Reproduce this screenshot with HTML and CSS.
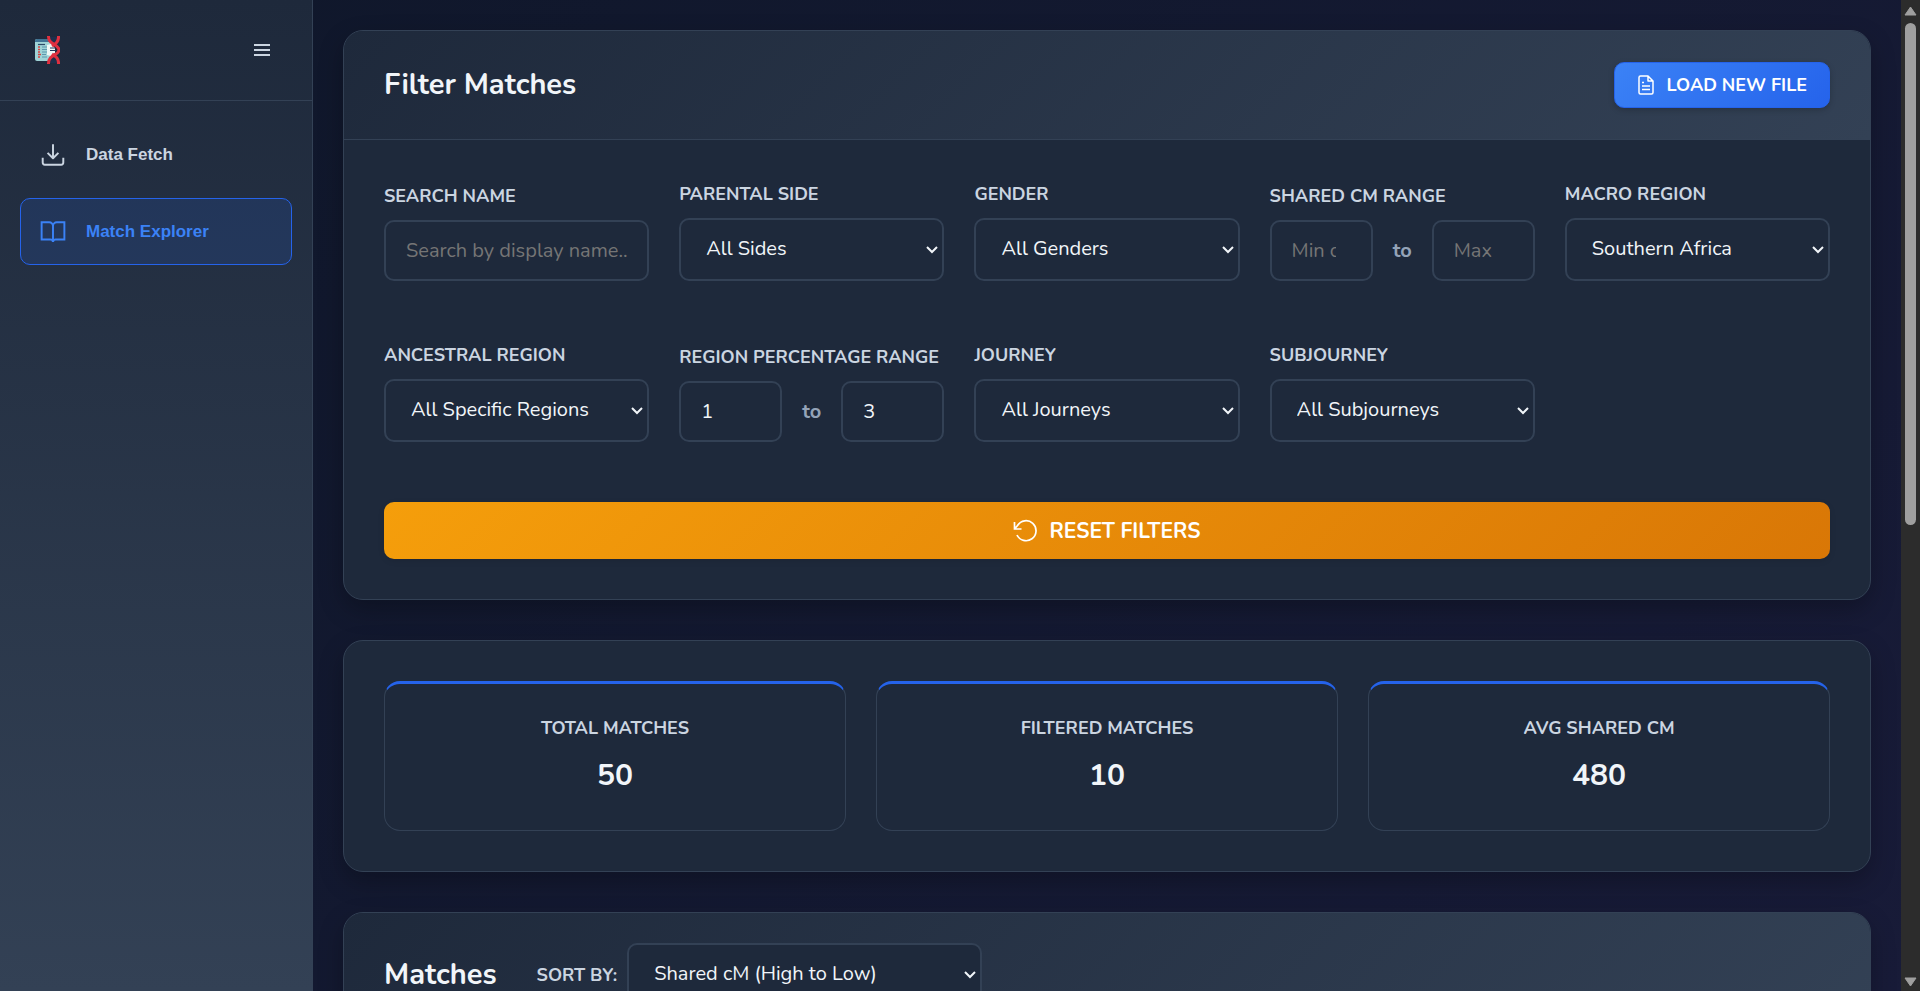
FILE: index.html
```html
<!DOCTYPE html>
<html lang="en">
<head>
    <meta charset="UTF-8">
    <meta name="viewport" content="width=device-width, initial-scale=1.0">
    <title>Match Explorer</title>
    <link rel="stylesheet" href="styles.css">
</head>
<body>
    <aside class="sidebar">
        <div class="sidebar-header">
            <svg class="logo" viewBox="0 0 26 28" width="26" height="28" aria-hidden="true">
                <rect x="1" y="3" width="17" height="22" rx="2" fill="#9fd3d6"/>
                <path d="M1 6V5a2 2 0 0 1 2-2h12v3z" fill="#3f7394"/>
                <path d="M4 8.500h7" stroke="#2c4a66" stroke-width="1.200"/>
                <path d="M8 11h5M8 13.500h5M8 16h5M8 18.500h4M8 21h5" stroke="#5b97ad" stroke-width="1.200"/>
                <path d="M4 11h2M4 13.500h2M4 16h2M4 18.500h3M4 21h2" stroke="#d8433f" stroke-width="1.300"/>
                <path d="M13 9l4-1 4 4v5l-4 3-4-1z" fill="#eef8f6"/>
                <path d="M15 1h9v4l-4 4-5-4zM15 27h9v-4l-4-4-5 4z" fill="#1d2f4c"/>
                <path d="M16 12h5M16 14.500h6" stroke="#24385a" stroke-width="1"/>
                <path d="M14.500 0C14 9 25 8 25 14C25 20 14 18 14.500 28" fill="none" stroke="#e0303f" stroke-width="3"/>
                <path d="M24.500 0C25 6 21 8 18 10M18 18C21 20 25 22 24.500 28" fill="none" stroke="#e0303f" stroke-width="3"/>
            </svg>
            <button class="menu-toggle" aria-label="Toggle menu">
                <svg viewBox="0 0 20 20" width="20" height="20" fill="none" stroke="currentColor" stroke-width="2"><path d="M2 5h16M2 10h16M2 15h16"/></svg>
            </button>
        </div>
        <nav class="sidebar-nav">
            <a class="nav-item" href="#fetch">
                <svg viewBox="0 0 24 24" width="26" height="26" fill="none" stroke="currentColor" stroke-width="1.800" stroke-linejoin="round"><path d="M12 2v13M7 10l5 5 5-5M2.500 14.500V19a2 2 0 0 0 2 2h15a2 2 0 0 0 2-2v-4.500"/></svg>
                <span>Data Fetch</span>
            </a>
            <a class="nav-item active" href="#explorer">
                <svg viewBox="0 0 24 24" width="26" height="26" fill="none" stroke="currentColor" stroke-width="1.800"><path d="M1.500 3h7a3.500 3.500 0 0 1 3.500 3.500V21a2.500 2.500 0 0 0-2.500-2h-8zM22.500 3h-7A3.500 3.500 0 0 0 12 6.500V21a2.500 2.500 0 0 1 2.500-2h8z"/></svg>
                <span>Match Explorer</span>
            </a>
        </nav>
    </aside>

    <main class="content">
        <section class="panel">
            <div class="panel-header">
                <h2>Filter Matches</h2>
                <button class="load-button">
                    <svg viewBox="0 0 18 20" width="18" height="20" fill="none" stroke="currentColor" stroke-width="1.500" stroke-linejoin="round"><path d="M11 1H3.500A1.500 1.500 0 0 0 2 2.500v15A1.500 1.500 0 0 0 3.500 19h11a1.500 1.500 0 0 0 1.500-1.500V6zM11 1v5h5M5 7.500h2M5 11h8M5 14.500h8"/></svg>
                    LOAD NEW FILE
                </button>
            </div>
            <div class="panel-body">
                <div class="filters">
                    <div class="filter">
                        <label for="searchName">SEARCH NAME</label>
                        <input type="text" id="searchName" placeholder="Search by display name...">
                    </div>
                    <div class="filter">
                        <label for="side">PARENTAL SIDE</label>
                        <select id="side"><option>All Sides</option></select>
                    </div>
                    <div class="filter">
                        <label for="gender">GENDER</label>
                        <select id="gender"><option>All Genders</option></select>
                    </div>
                    <div class="filter">
                        <label for="minCm">SHARED CM RANGE</label>
                        <div class="range">
                            <input type="number" id="minCm" placeholder="Min cM">
                            <span>to</span>
                            <input type="number" id="maxCm" aria-label="Max cM" placeholder="Max">
                        </div>
                    </div>
                    <div class="filter">
                        <label for="macro">MACRO REGION</label>
                        <select id="macro"><option>Southern Africa</option></select>
                    </div>
                    <div class="filter">
                        <label for="region">ANCESTRAL REGION</label>
                        <select id="region"><option>All Specific Regions</option></select>
                    </div>
                    <div class="filter">
                        <label for="minPercent">REGION PERCENTAGE RANGE</label>
                        <div class="range">
                            <input type="number" id="minPercent" value="1">
                            <span>to</span>
                            <input type="number" id="maxPercent" aria-label="Max percentage" value="3">
                        </div>
                    </div>
                    <div class="filter">
                        <label for="journey">JOURNEY</label>
                        <select id="journey"><option>All Journeys</option></select>
                    </div>
                    <div class="filter">
                        <label for="subjourney">SUBJOURNEY</label>
                        <select id="subjourney"><option>All Subjourneys</option></select>
                    </div>
                </div>
                <button class="reset-button">
                    <svg viewBox="0 0 24 24" width="24" height="24" fill="none" stroke="currentColor" stroke-width="1.700"><path d="M1.500 3v7h7M2 9.500l2.500-3A10 10 0 1 1 4 16"/></svg>
                    RESET FILTERS
                </button>
            </div>
        </section>

        <section class="panel">
            <div class="panel-body stats">
                <div class="stat">
                    <h3>TOTAL MATCHES</h3>
                    <p>50</p>
                </div>
                <div class="stat">
                    <h3>FILTERED MATCHES</h3>
                    <p>10</p>
                </div>
                <div class="stat">
                    <h3>AVG SHARED CM</h3>
                    <p>480</p>
                </div>
            </div>
        </section>

        <section class="panel">
            <div class="panel-header matches-header">
                <h2>Matches</h2>
                <div class="sort">
                    <label for="sort">SORT BY:</label>
                    <select id="sort"><option>Shared cM (High to Low)</option></select>
                </div>
            </div>
        </section>
    </main>

    <div class="scrollbar" aria-hidden="true">
        <svg viewBox="0 0 13 10" width="13" height="10"><path d="M6.500 1L12 9H1z" fill="#9f9f9f" stroke="#9f9f9f" stroke-linejoin="round"/></svg>
        <div class="track"><div class="thumb"></div></div>
        <svg viewBox="0 0 13 10" width="13" height="10"><path d="M6.500 9L12 1H1z" fill="#9f9f9f" stroke="#9f9f9f" stroke-linejoin="round"/></svg>
    </div>
</body>
</html>
```
FILE: styles.css
```css
* {
    box-sizing: border-box;
}

body {
    margin: 0;
    height: 100vh;
    display: flex;
    overflow: hidden;
    background: linear-gradient(135deg, #0f172a 0%, #181b38 100%);
    color: #f1f5f9;
    font-family: Nunito, Lato, sans-serif;
    font-size: 20px;
}

h2, h3, p {
    margin: 0;
}

button, input, select {
    font-family: inherit;
    font-size: 20px;
}

/* Sidebar */
.sidebar {
    flex: 0 0 313px;
    border-right: 1px solid #334155;
    background: linear-gradient(180deg, #1e293b 0%, #334155 100%);
}

.sidebar-header {
    display: flex;
    align-items: center;
    justify-content: space-between;
    height: 101px;
    padding: 0 40px 0 34px;
    border-bottom: 1px solid #334155;
}

.menu-toggle {
    display: flex;
    padding: 0;
    border: none;
    background: none;
    color: #cbd5e1;
}

.sidebar-nav {
    display: flex;
    flex-direction: column;
    gap: 10px;
    padding: 20px;
}

.nav-item {
    display: flex;
    align-items: center;
    gap: 20px;
    padding: 20px 19px;
    height: 67px;
    border: 1px solid transparent;
    border-radius: 10px;
    color: #cbd5e1;
    font-family: "Liberation Sans", Arial, sans-serif;
    font-size: 17px;
    font-weight: bold;
    text-decoration: none;
}

.nav-item.active {
    border-color: #2563eb;
    background: rgba(37, 99, 235, 0.15);
    color: #3b82f6;
}

/* Panels */
.content {
    flex: 1;
    min-width: 0;
    display: flex;
    flex-direction: column;
    gap: 40px;
    padding: 30px;
}

.panel {
    flex-shrink: 0;
    overflow: hidden;
    border: 1px solid #334155;
    border-radius: 20px;
    background: #1e293b;
    box-shadow: 0 10px 25px rgba(0, 0, 0, 0.25);
}

.panel-header {
    display: flex;
    align-items: center;
    justify-content: space-between;
    min-height: 109px;
    padding: 30px 40px;
    border-bottom: 1px solid #334155;
    background: linear-gradient(135deg, #1e293b 0%, #334155 100%);
}

.panel-header h2 {
    font-size: 29px;
    font-weight: bold;
    line-height: 32px;
}

.panel-body {
    padding: 40px;
}

.load-button, .reset-button {
    display: flex;
    align-items: center;
    justify-content: center;
    gap: 12px;
    border-radius: 10px;
    color: white;
    font-weight: bold;
    cursor: pointer;
}

.load-button {
    height: 46px;
    padding: 0 22px;
    border: 1px solid #2563eb;
    background: linear-gradient(135deg, #3b82f6 0%, #2563eb 100%);
    box-shadow: 0 2px 6px rgba(0, 0, 0, 0.2);
    font-size: 18px;
}

.reset-button {
    width: 100%;
    height: 57px;
    margin-top: 60px;
    border: none;
    background: linear-gradient(135deg, #f59e0b 0%, #d97706 100%);
    box-shadow: 0 2px 6px rgba(0, 0, 0, 0.1);
    font-size: 21px;
}

/* Filters */
.filters {
    display: grid;
    grid-template-columns: repeat(5, minmax(0, 1fr));
    align-items: end;
    gap: 60px 30px;
}

.filter label {
    display: block;
    margin-bottom: 10px;
}

label, .stat h3 {
    color: #cbd5e1;
    font-size: 18px;
    font-weight: bold;
    line-height: 28px;
    white-space: nowrap;
}

input, select {
    display: block;
    width: 100%;
    min-width: 0;
    height: 61px;
    padding: 16px 20px;
    border: 2px solid #334155;
    border-radius: 10px;
    background: #1e293b;
    color: #f1f5f9;
}

select {
    height: 63px;
    padding: 15px 25px 17px;
    appearance: none;
    background: #1e293b url("data:image/svg+xml,%3Csvg xmlns='http://www.w3.org/2000/svg' width='12' height='8' fill='none' stroke='%23f1f5f9' stroke-width='2'%3E%3Cpath d='M1 1l5 5 5-5'/%3E%3C/svg%3E") no-repeat right 4px center;
}

input::placeholder {
    color: #757575;
}

.range {
    display: flex;
    align-items: center;
    gap: 20px;
}

.range input {
    flex: 1;
}

.range span {
    color: #94a3b8;
    font-weight: bold;
}

/* Stats */
.stats {
    display: grid;
    grid-template-columns: repeat(3, 1fr);
    gap: 30px;
}

.stat {
    padding: 30px;
    border: 1px solid #334155;
    border-top: 3px solid #2563eb;
    border-radius: 16px;
    text-align: center;
}

.stat p {
    margin-top: 10px;
    font-size: 30px;
    font-weight: bold;
    line-height: 48px;
}

/* Matches */
.matches-header {
    justify-content: flex-start;
    gap: 40px;
}

.sort {
    display: flex;
    align-items: center;
    gap: 10px;
}

.sort select {
    width: 355px;
}

/* Scrollbar */
.scrollbar {
    flex: 0 0 19px;
    display: flex;
    flex-direction: column;
    align-items: center;
    gap: 7px;
    padding: 6px 0 4px;
    background: #2c2c2c;
}

.track {
    flex: 1;
}

.thumb {
    width: 11px;
    height: 53%;
    border-radius: 6px;
    background: #9f9f9f;
}
```
